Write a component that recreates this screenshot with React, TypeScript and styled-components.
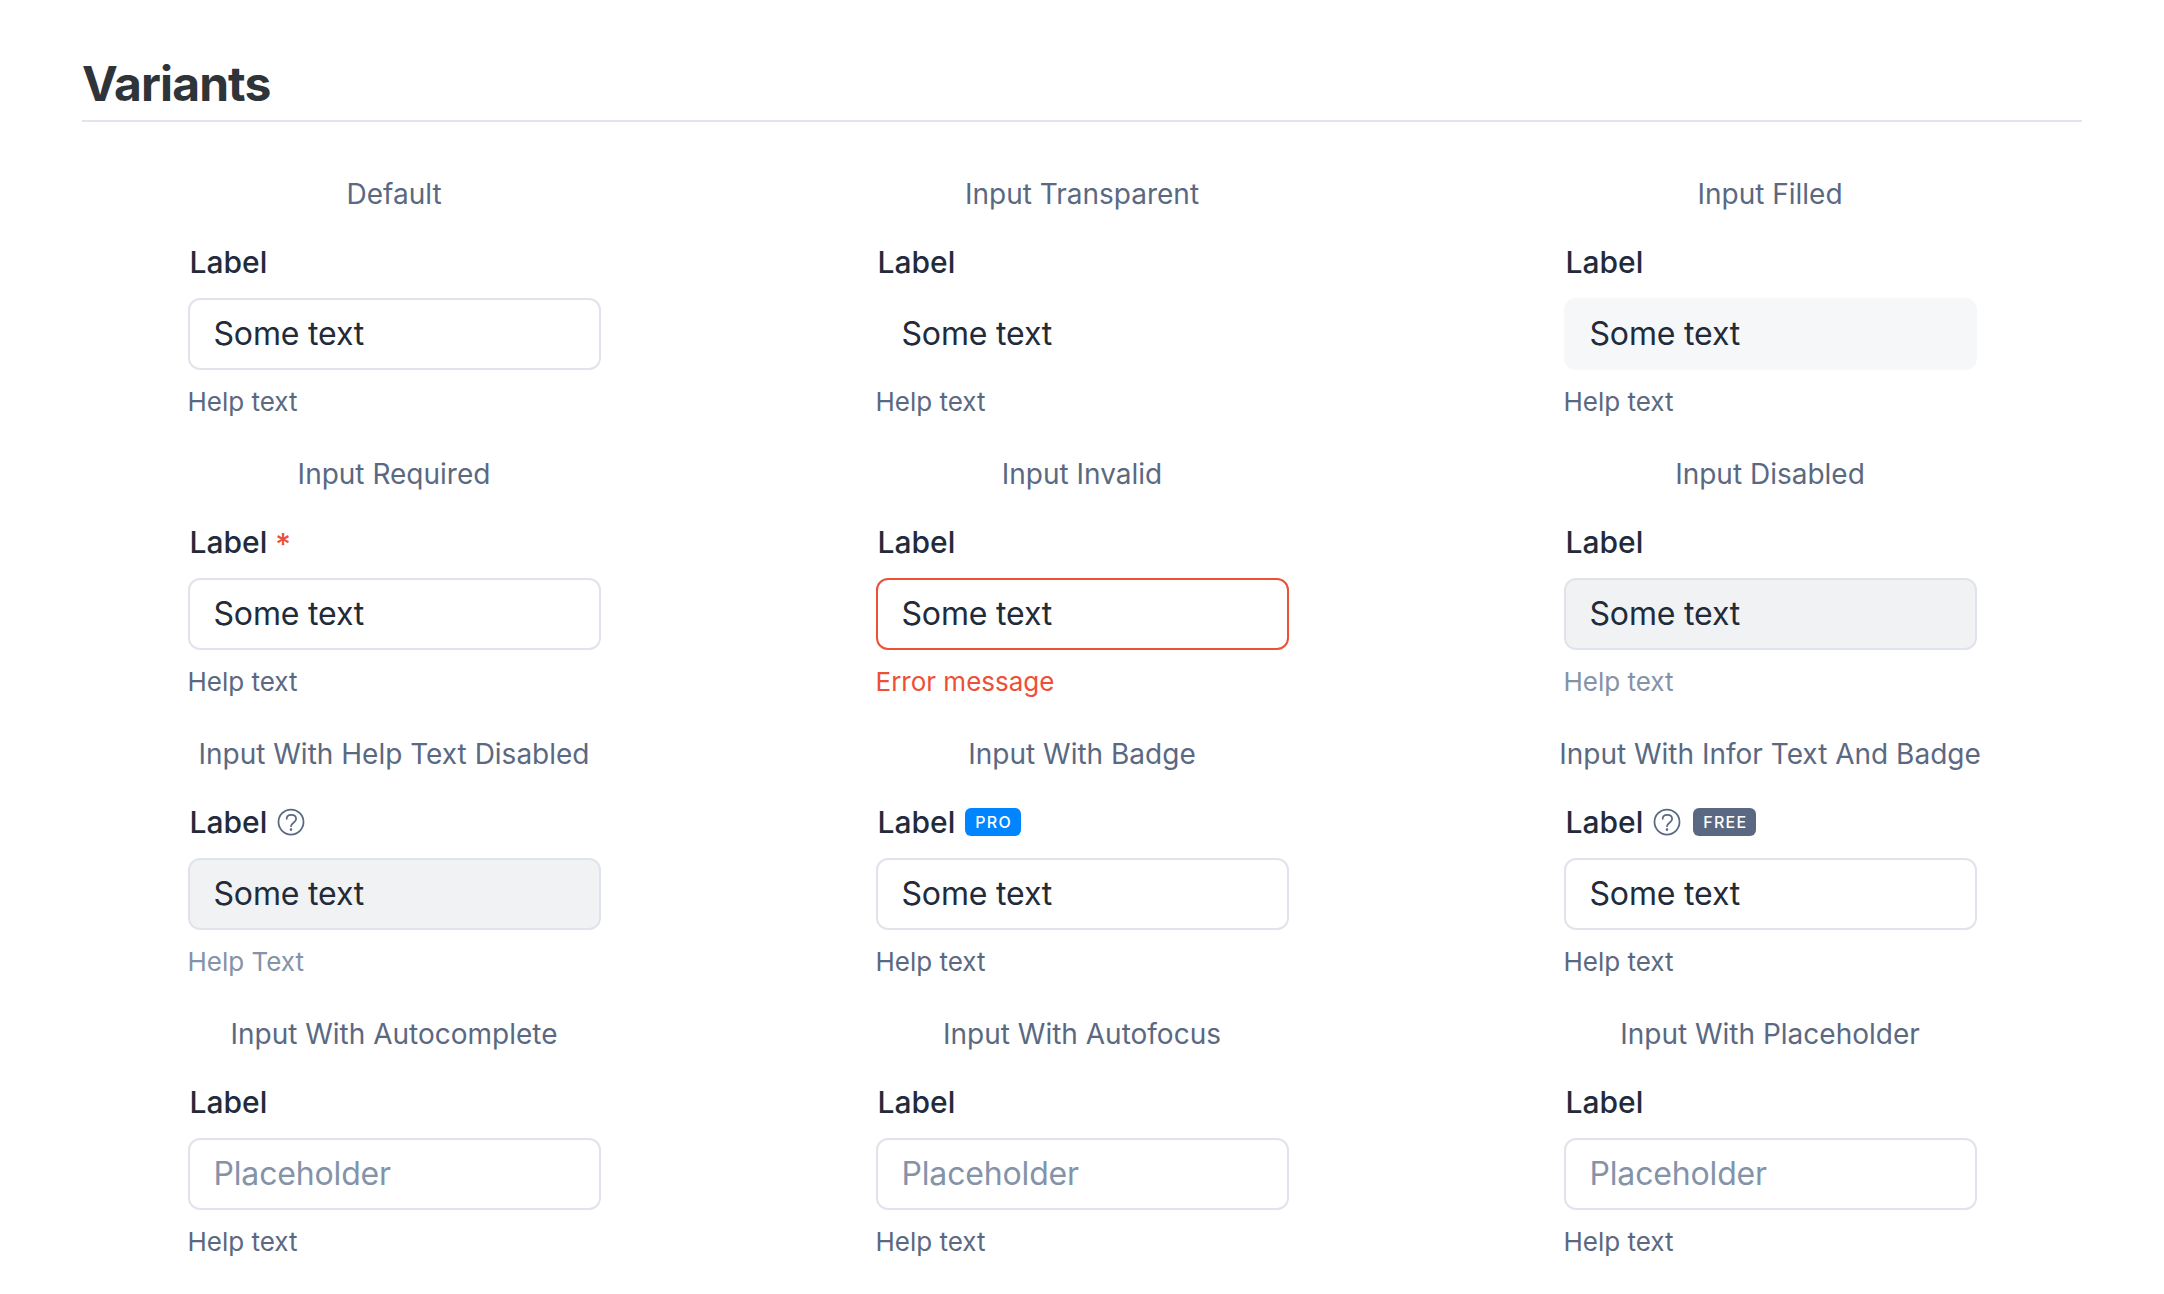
import React from "react";
import styled, { createGlobalStyle } from "styled-components";

const GlobalStyle = createGlobalStyle`
  * { box-sizing: border-box; }
  body { margin: 0; background: #fff; font-family: Inter, "Liberation Sans", sans-serif; }
`;

const Page = styled.main`
  width: 2164px;
  height: 1294px;
  overflow: hidden;
  padding: 52px 82px 0;
`;

const Heading = styled.h2`
  margin: 0;
  height: 70px;
  padding-top: 3px;
  border-bottom: 2px solid #dfe5eb;
  color: #2e3438;
  font-size: 48px;
  font-weight: 700;
  line-height: 58px;
  letter-spacing: -0.9px;
`;

const Grid = styled.div`
  display: grid;
  grid-template-columns: repeat(3, 1fr);
  column-gap: 64px;
  grid-auto-rows: 280px;
  padding-top: 52px;
`;

const Cell = styled.section`
  display: flex;
  flex-direction: column;
  align-items: center;
`;

const Title = styled.p`
  margin: 0;
  color: #5a6981;
  font-size: 28px;
  line-height: 40px;
  white-space: nowrap;
`;

const Field = styled.div`
  width: 413px;
  margin-top: 32px;
  display: flex;
  flex-direction: column;
`;

const LabelRow = styled.div`
  display: flex;
  align-items: center;
  height: 32px;
  padding-left: 2px;
`;

const Label = styled.label`
  color: #222b3a;
  font-size: 30px;
  font-weight: 500;
  line-height: 32px;
`;

const Star = styled.span`
  margin-left: 8px;
  padding-top: 4px;
  color: #ec5037;
  font-size: 30px;
  font-weight: 500;
  line-height: 32px;
`;

const HelpIcon = styled.svg`
  width: 28px;
  height: 28px;
  margin: 0 2px 0 10px;
  fill: none;
  stroke: #5a6981;
  stroke-width: 1.75;
  stroke-linecap: round;
  stroke-linejoin: round;
`;

const Badge = styled.span<{ $color: string }>`
  height: 28px;
  margin-left: 10px;
  padding: 0 9px 0 10px;
  border-radius: 6px;
  background: ${(p) => p.$color};
  color: #fff;
  font-size: 16px;
  font-weight: 500;
  line-height: 28px;
  letter-spacing: 1.28px;
`;

type Look = "outline" | "transparent" | "filled" | "invalid" | "disabled";

const borders: Record<Look, string> = {
  outline: "#e0e4ea",
  transparent: "transparent",
  filled: "#f6f7f9",
  invalid: "#ec5037",
  disabled: "#e0e4ea",
};

const fills: Record<Look, string> = {
  outline: "#fff",
  transparent: "transparent",
  filled: "#f6f7f9",
  invalid: "#fff",
  disabled: "#f1f2f4",
};

const TextInput = styled.input<{ $look: Look }>`
  width: 100%;
  height: 72px;
  margin: 20px 0 0;
  padding: 0 24px 2px;
  border: 2px solid ${(p) => borders[p.$look]};
  border-radius: 12px;
  outline: none;
  background: ${(p) => fills[p.$look]};
  color: #222b3a;
  font: 400 32px Inter, "Liberation Sans", sans-serif;
  letter-spacing: -0.16px;

  &::placeholder {
    color: #8493a8;
    opacity: 1;
  }
`;

const Help = styled.p<{ $color: string }>`
  margin: 16px 0 0;
  color: ${(p) => p.$color};
  font-size: 26px;
  line-height: 32px;
`;

interface Variant {
  title: string;
  look?: Look;
  placeholder?: boolean;
  required?: boolean;
  info?: boolean;
  badge?: { text: string; color: string };
  help?: string;
  helpColor?: string;
}

const variants: Variant[] = [
  { title: "Default" },
  { title: "Input Transparent", look: "transparent" },
  { title: "Input Filled", look: "filled" },
  { title: "Input Required", required: true },
  { title: "Input Invalid", look: "invalid", help: "Error message", helpColor: "#ec5037" },
  { title: "Input Disabled", look: "disabled", helpColor: "#8493a8" },
  { title: "Input With Help Text Disabled", look: "disabled", info: true, help: "Help Text", helpColor: "#8493a8" },
  { title: "Input With Badge", badge: { text: "PRO", color: "#0085ff" } },
  { title: "Input With Infor Text And Badge", info: true, badge: { text: "FREE", color: "#5a6981" } },
  { title: "Input With Autocomplete", placeholder: true },
  { title: "Input With Autofocus", placeholder: true },
  { title: "Input With Placeholder", placeholder: true },
];

const Question = () => (
  <HelpIcon viewBox="0 0 28 28">
    <circle cx="14" cy="14" r="12.5" />
    <path d="M9.7 10.8C9.7 8.4 11.6 6.9 14.3 6.9s4.8 1.6 4.8 4.1c0 3.6-5.1 3.8-5.1 7.3" />
    <circle cx="14" cy="21.6" r="1.3" fill="#5a6981" stroke="none" />
  </HelpIcon>
);

export default function App() {
  return (
    <Page>
      <GlobalStyle />
      <Heading>Variants</Heading>
      <Grid>
        {variants.map((v, i) => (
          <Cell key={v.title}>
            <Title>{v.title}</Title>
            <Field>
              <LabelRow>
                <Label htmlFor={`field-${i}`}>Label</Label>
                {v.required && <Star>*</Star>}
                {v.info && <Question />}
                {v.badge && <Badge $color={v.badge.color}>{v.badge.text}</Badge>}
              </LabelRow>
              <TextInput
                id={`field-${i}`}
                $look={v.look ?? "outline"}
                disabled={v.look === "disabled"}
                defaultValue={v.placeholder ? undefined : "Some text"}
                placeholder="Placeholder"
              />
              <Help $color={v.helpColor ?? "#5a6981"}>{v.help ?? "Help text"}</Help>
            </Field>
          </Cell>
        ))}
      </Grid>
    </Page>
  );
}
